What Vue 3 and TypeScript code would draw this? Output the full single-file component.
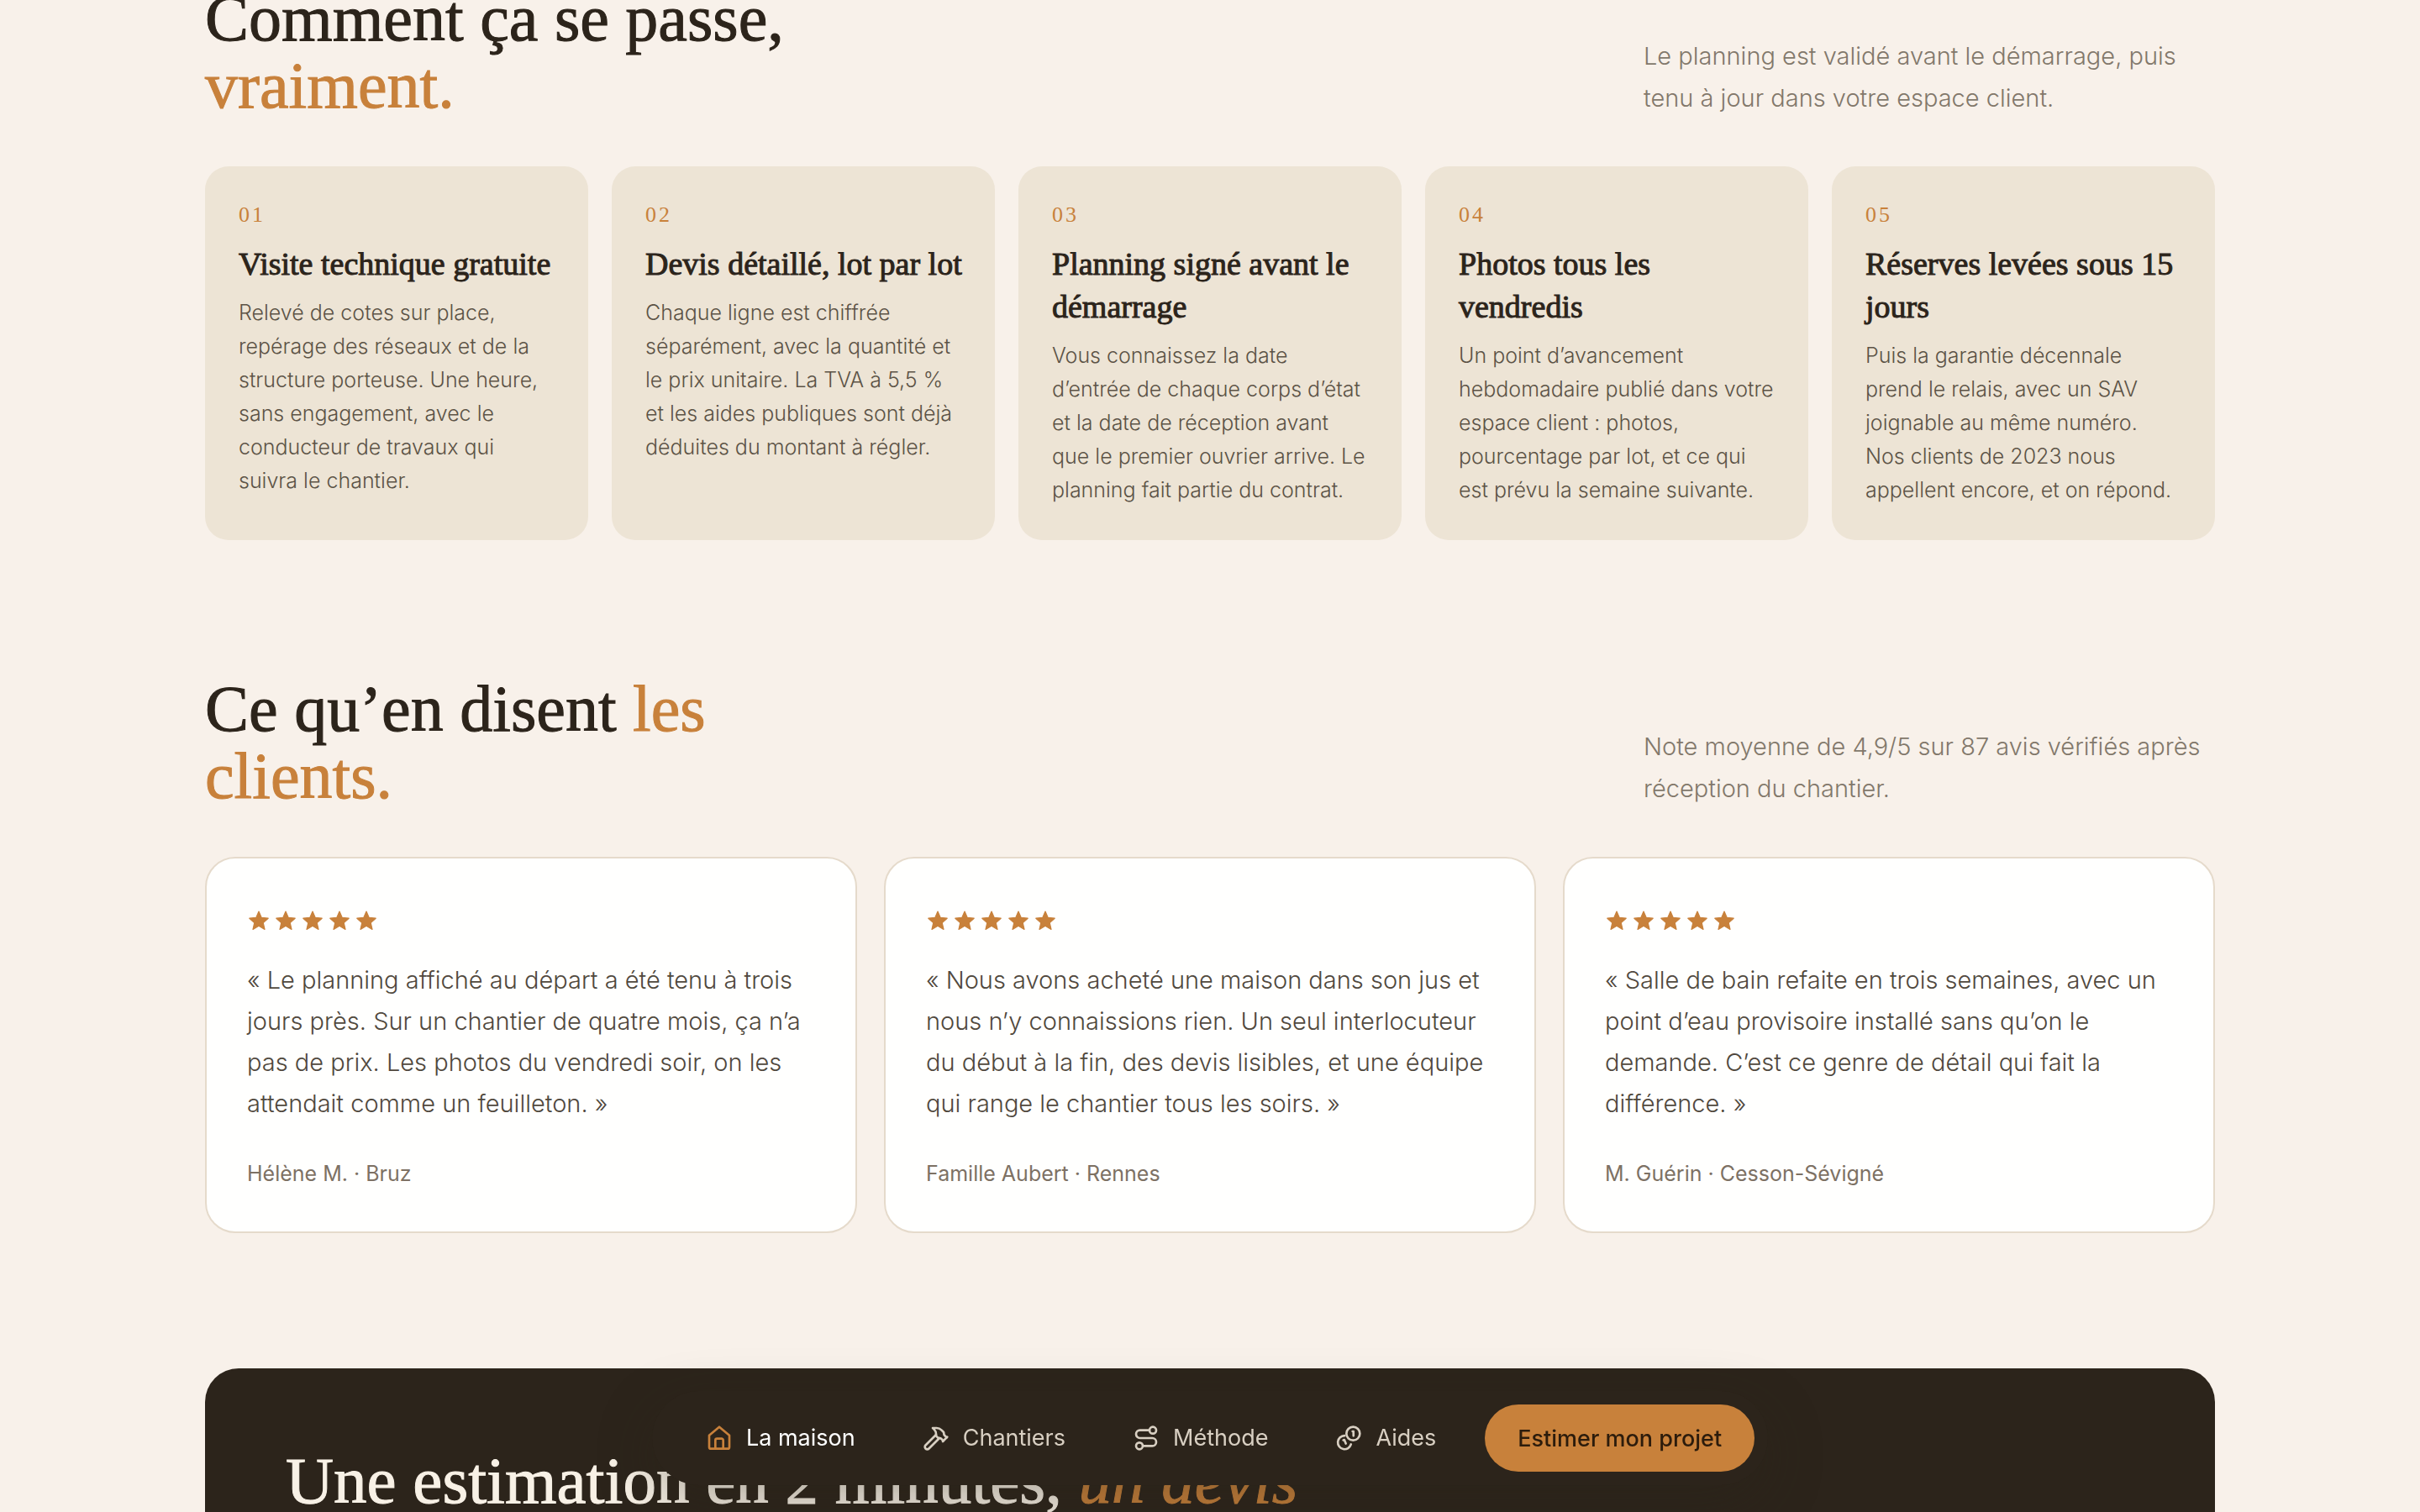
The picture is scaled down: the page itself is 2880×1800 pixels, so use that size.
<script setup lang="ts">
interface Step {
  title: string
  text: string
}

interface Review {
  quote: string
  author: string
}

interface NavItem {
  label: string
  href: string
  icon: string[]
  active?: boolean
}

const steps: Step[] = [
  {
    title: 'Visite technique gratuite',
    text: 'Relevé de cotes sur place, repérage des réseaux et de la structure porteuse. Une heure, sans engagement, avec le conducteur de travaux qui suivra le chantier.',
  },
  {
    title: 'Devis détaillé, lot par lot',
    text: 'Chaque ligne est chiffrée séparément, avec la quantité et le prix unitaire. La TVA à 5,5\u00a0% et les aides publiques sont déjà déduites du montant à régler.',
  },
  {
    title: 'Planning signé avant le démarrage',
    text: 'Vous connaissez la date d’entrée de chaque corps d’état et la date de réception avant que le premier ouvrier arrive. Le planning fait partie du contrat.',
  },
  {
    title: 'Photos tous les vendredis',
    text: 'Un point d’avancement hebdomadaire publié dans votre espace client\u00a0: photos, pourcentage par lot, et ce qui est prévu la semaine suivante.',
  },
  {
    title: 'Réserves levées sous 15 jours',
    text: 'Puis la garantie décennale prend le relais, avec un SAV joignable au même numéro. Nos clients de 2023 nous appellent encore, et on répond.',
  },
]

const reviews: Review[] = [
  {
    quote: '«\u00a0Le planning affiché au départ a été tenu à trois jours près. Sur un chantier de quatre mois, ça n’a pas de prix. Les photos du vendredi soir, on les attendait comme un feuilleton.\u00a0»',
    author: 'Hélène M. · Bruz',
  },
  {
    quote: '«\u00a0Nous avons acheté une maison dans son jus et nous n’y connaissions rien. Un seul interlocuteur du début à la fin, des devis lisibles, et une équipe qui range le chantier tous les soirs.\u00a0»',
    author: 'Famille Aubert · Rennes',
  },
  {
    quote: '«\u00a0Salle de bain refaite en trois semaines, avec un point d’eau provisoire installé sans qu’on le demande. C’est ce genre de détail qui fait la différence.\u00a0»',
    author: 'M. Guérin · Cesson-Sévigné',
  },
]

const navItems: NavItem[] = [
  {
    label: 'La maison',
    href: '#maison',
    active: true,
    icon: [
      'M3 9.5 12 2l9 7.5V20a1.5 1.5 0 0 1-1.5 1.5h-15A1.5 1.5 0 0 1 3 20z',
      'M8.5 21.5V14a1.5 1.5 0 0 1 1.5-1.5h4a1.5 1.5 0 0 1 1.5 1.5v7.5',
    ],
  },
  {
    label: 'Chantiers',
    href: '#chantiers',
    icon: [
      'm15 12-9.373 9.373a1 1 0 0 1-3.001-3L12 9',
      'm18 15 4-4',
      'm21.5 11.5-1.914-1.914A2 2 0 0 1 19 8.172v-.344a2 2 0 0 0-.586-1.414l-1.657-1.657A6 6 0 0 0 12.516 3H9l1.243 1.243A6 6 0 0 1 12 8.485V10l2 2h1.172a2 2 0 0 1 1.414.586L18.5 14.5',
    ],
  },
  {
    label: 'Méthode',
    href: '#methode',
    icon: [
      'M3 19a3 3 0 1 0 6 0a3 3 0 1 0-6 0',
      'M9 19h8.5a3.5 3.5 0 0 0 0-7h-11a3.5 3.5 0 0 1 0-7H15',
      'M15 5a3 3 0 1 0 6 0a3 3 0 1 0-6 0',
    ],
  },
  {
    label: 'Aides',
    href: '#aides',
    icon: [
      'M10 8a6 6 0 1 0 12 0a6 6 0 1 0-12 0',
      'M8.3 9.9A6 6 0 1 0 14.1 17.6',
      'M15.5 6h.8v4',
      'm7.2 13.8.9-.3 1.4 3.4',
    ],
  },
]

const stepNumber = (index: number): string => String(index + 1).padStart(2, '0')
</script>

<template>
  <div class="page">
    <main class="container">
      <section id="methode">
        <header class="section-head">
          <h2>Comment ça se passe, <em>vraiment.</em></h2>
          <p>Le planning est validé avant le démarrage, puis tenu à jour dans votre espace client.</p>
        </header>
        <ol class="steps">
          <li v-for="(step, index) in steps" :key="step.title" class="step">
            <span class="step-number">{{ stepNumber(index) }}</span>
            <h3>{{ step.title }}</h3>
            <p>{{ step.text }}</p>
          </li>
        </ol>
      </section>

      <section id="avis">
        <header class="section-head">
          <h2>Ce qu’en disent <em>les clients.</em></h2>
          <p>Note moyenne de 4,9/5 sur 87 avis vérifiés après réception du chantier.</p>
        </header>
        <div class="reviews">
          <figure v-for="review in reviews" :key="review.author" class="review">
            <div class="stars" role="img" aria-label="5 étoiles sur 5">
              <svg v-for="n in 5" :key="n" viewBox="0 0 24 24" aria-hidden="true">
                <path d="m12 2.6 2.8 6.3 6.8.7-5.1 4.6 1.5 6.7L12 17.4l-6 3.5 1.5-6.7-5.1-4.6 6.8-.7z" />
              </svg>
            </div>
            <blockquote>{{ review.quote }}</blockquote>
            <figcaption>{{ review.author }}</figcaption>
          </figure>
        </div>
      </section>

      <section id="estimation" class="estimate">
        <h2>Une estimation en 2 minutes, <em>un devis</em></h2>
      </section>
    </main>

    <div class="dock">
      <nav class="nav" aria-label="Navigation principale">
        <a
          v-for="item in navItems"
          :key="item.label"
          :href="item.href"
          class="nav-link"
          :class="{ active: item.active }"
        >
          <svg viewBox="0 0 24 24" aria-hidden="true">
            <path v-for="d in item.icon" :key="d" :d="d" />
          </svg>
          {{ item.label }}
        </a>
        <button type="button" class="nav-button">Estimer mon projet</button>
      </nav>
    </div>
  </div>
</template>

<style>
body {
  background: #f8f1ea;
}
</style>

<style scoped>
.page {
  --ink: #2c241b;
  --accent: #c8813b;
  --serif: "Liberation Serif", serif;
  height: 100vh;
  overflow: hidden;
  background: #f8f1ea;
  color: var(--ink);
  font-family: Inter, sans-serif;
  font-weight: 300;
}

h2,
h3,
p,
figure,
blockquote {
  margin: 0;
}

.container {
  display: flex;
  flex-direction: column;
  gap: 161px;
  max-width: 2392px;
  margin: -18px auto 0;
}

.section-head {
  display: flex;
  align-items: flex-end;
  justify-content: space-between;
  margin-bottom: 56px;
}

h2,
h3 {
  font-family: var(--serif);
  font-weight: 400;
  -webkit-text-stroke: 1px currentColor;
}

h2 {
  font-size: 78px;
  line-height: 80px;
}

.section-head h2 {
  max-width: 760px;
}

h2 em {
  color: var(--accent);
  font-style: normal;
}

.section-head p {
  width: 680px;
  color: #82786b;
  font-size: 29px;
  line-height: 50px;
}

.steps {
  display: grid;
  grid-template-columns: repeat(5, 1fr);
  gap: 28px;
  margin: 0;
  padding: 0;
  list-style: none;
}

.step {
  padding: 40px 36px 40px 40px;
  border-radius: 28px;
  background: #ede4d5;
}

.step-number {
  display: block;
  margin-bottom: 15px;
  color: var(--accent);
  font-family: var(--serif);
  font-size: 26px;
  font-weight: 400;
  letter-spacing: 3px;
  line-height: 36px;
}

.step h3 {
  margin-bottom: 12px;
  font-size: 38px;
  line-height: 51px;
}

.step p {
  padding-right: 4px;
  color: #5c5346;
  font-size: 25px;
  line-height: 40px;
}

.reviews {
  display: grid;
  grid-template-columns: repeat(3, 1fr);
  gap: 32px;
}

.review {
  padding: 48px;
  border: 2px solid #e5dacb;
  border-radius: 36px;
  background: #fffffe;
}

.stars {
  display: flex;
  align-items: center;
  gap: 4px;
  height: 52px;
  margin-bottom: 20px;
}

.stars svg {
  width: 28px;
  height: 28px;
  fill: var(--accent);
  stroke: var(--accent);
  stroke-width: 1;
  stroke-linejoin: round;
}

.review blockquote {
  margin-bottom: 38px;
  color: #50483d;
  font-size: 29px;
  line-height: 49px;
}

.review figcaption {
  color: #7d7164;
  font-size: 25px;
  font-weight: 400;
  line-height: 42px;
}

.estimate {
  padding: 96px;
  border-radius: 40px;
  background: var(--ink);
  color: #f8f1e6;
}

.estimate h2 {
  font-size: 79px;
  line-height: 76px;
}

.estimate em {
  font-style: italic;
}

.dock {
  position: fixed;
  right: 0;
  bottom: 32px;
  left: 0;
  display: flex;
  justify-content: center;
}

.nav {
  display: flex;
  align-items: center;
  gap: 8px;
  padding: 16px 16px 16px 28px;
  border-radius: 56px;
  background: var(--ink);
  box-shadow: 0 20px 64px rgba(44, 36, 27, 0.35);
}

.nav-link {
  display: flex;
  align-items: center;
  gap: 16px;
  padding: 0 36px;
  color: #d8cfc2;
  font-size: 27px;
  font-weight: 400;
  line-height: 40px;
  text-decoration: none;
}

.nav-link svg {
  width: 32px;
  height: 32px;
  fill: none;
  stroke: currentColor;
  stroke-width: 2;
  stroke-linecap: round;
  stroke-linejoin: round;
}

.nav-link.active {
  color: #ffffff;
}

.nav-link.active svg {
  color: var(--accent);
}

.nav-button {
  height: 80px;
  margin: 0 0 0 14px;
  padding: 0 39px;
  border: 0;
  border-radius: 40px;
  background: var(--accent);
  color: #2c1c0c;
  font-family: inherit;
  font-size: 27px;
  font-weight: 500;
}
</style>
